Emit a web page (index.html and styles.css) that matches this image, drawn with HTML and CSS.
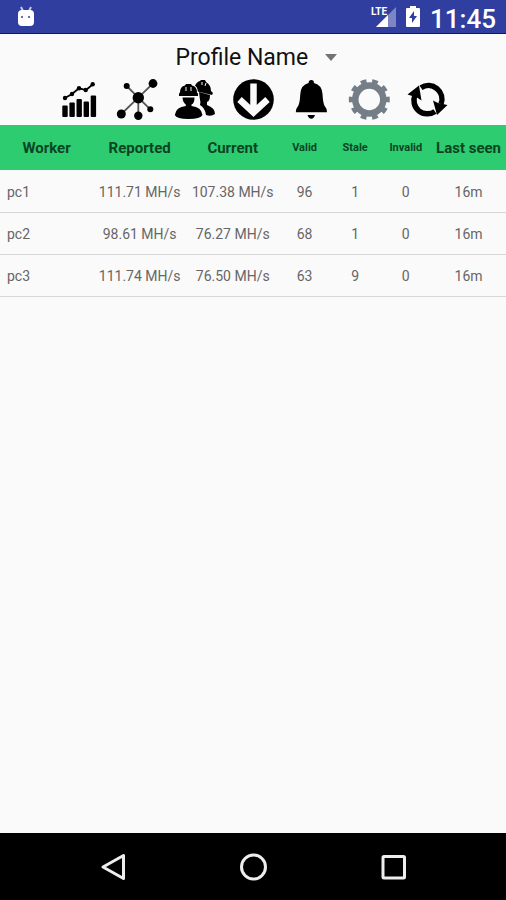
FILE: index.html
```html
<!DOCTYPE html>
<html lang="en">

<head>
    <meta charset="UTF-8">
    <meta name="viewport" content="width=device-width, initial-scale=1.0">
    <title>Workers</title>
    <link rel="stylesheet" href="styles.css">
</head>

<body>
    <header class="status-bar">
        <svg class="droid" width="20" height="22" viewBox="0 0 20 22">
            <path d="M5 1l2 4M15 1l-2 4" stroke="#c3c9ea" stroke-width="2" />
            <rect x="2" y="4" width="16" height="16" rx="4" fill="#fff" />
            <circle cx="6" cy="11" r="1" fill="#303f9f" />
            <circle cx="13" cy="11" r="1" fill="#303f9f" />
        </svg>
        <div class="status-right">
            <div class="signal">
                <span class="lte">LTE</span>
                <svg width="20" height="20" viewBox="0 0 20 20">
                    <path d="M20 0v20H0z" fill="#7c86c3" />
                    <path d="M12 8v12H0z" fill="#fff" />
                </svg>
            </div>
            <svg width="14" height="21" viewBox="0 0 14 21">
                <path d="M4 0h6v2h3q1 0 1 1v17q0 1-1 1H1q-1 0-1-1V3q0-1 1-1h3z" fill="#fff" />
                <path d="M8 5L3 12h3v5l5-7H8z" fill="#303f9f" />
            </svg>
            <span class="clock">11:45</span>
        </div>
    </header>

    <main>
        <div class="profile">
            <select id="profile" aria-label="Profile">
                <option>Profile Name</option>
            </select>
            <svg width="12" height="7" viewBox="0 0 12 7">
                <path d="M0 0h12L6 7z" fill="#737373" />
            </svg>
        </div>

        <nav class="toolbar">
            <button aria-label="Statistics">
                <svg viewBox="0 0 42 42">
                    <g>
                        <rect x="4.3" y="26.5" width="5.4" height="11.5" rx="1" />
                        <rect x="11.4" y="23.5" width="5.4" height="14.5" rx="1" />
                        <rect x="18.5" y="20" width="5.4" height="18" rx="1" />
                        <rect x="25.6" y="22.5" width="5.4" height="15.5" rx="1" />
                        <rect x="32.7" y="16.5" width="5.4" height="21.5" rx="1" />
                    </g>
                    <path d="M7 19l7-4 7-5.7 7 1.7 7-5.7" fill="none" stroke="#000" stroke-width="1.8" />
                    <circle cx="7" cy="19" r="2.2" />
                    <circle cx="14" cy="15" r="2.2" />
                    <circle cx="21" cy="9.3" r="2.2" />
                    <circle cx="27.7" cy="11" r="2.2" />
                    <circle cx="34.7" cy="5.3" r="2.2" />
                </svg>
            </button>
            <button aria-label="Network">
                <svg viewBox="0 0 42 42">
                    <path d="M22.3 18.7L37 4.3M22.3 18.7L10.7 7M22.3 18.7L5.3 35M22.3 18.7v18M22.3 18.7l12 11.6" stroke="#555" stroke-width="1.8" />
                    <circle cx="22.3" cy="18.7" r="5.7" />
                    <circle cx="37" cy="4.5" r="4.4" />
                    <circle cx="10.7" cy="7" r="3" />
                    <circle cx="5.3" cy="35" r="4.5" />
                    <circle cx="22.3" cy="36.7" r="4.2" />
                    <circle cx="34.3" cy="30.3" r="3" />
                </svg>
            </button>
            <button aria-label="Workers">
                <svg viewBox="0 0 42 42">
                    <path d="M20 9q2-6 6-7l1-1h4l1 2q5 3 5 9l2 2-1 2-12-3-6-1zM25 13l11 3q0 6-3 7v3q8 3 8 9-4 3-9 1-1-7-6-10 1-3 0-5z" />
                    <path d="M5 17v-2.5l1-1q0-6 5-7L12 5h5l1 1.500q5 1 5 7l1 1V17zM8.500 18.500h12q0 6-3 7V27q10 1 11 9-2 4-14 4T.8 36q1-8 11-9v-1.500q-3-2-3.300-7z" stroke="#fafafa" stroke-width="2" paint-order="stroke" />
                    <path d="M12 8v4M17 8v4M28 3v3M32 4l-1 3" stroke="#fafafa" stroke-width="1" />
                </svg>
            </button>
            <button aria-label="Payouts">
                <svg viewBox="0 0 42 42">
                    <circle cx="21.5" cy="20.5" r="20.3" />
                    <path d="M21.5 4.5v30M7.5 20.5l14 13 14-13" fill="none" stroke="#fafafa" stroke-width="6.5" />
                </svg>
            </button>
            <button aria-label="Alerts">
                <svg viewBox="0 0 42 42">
                    <path d="M21.3 1q2.7 0 2.7 3 8 2 8.5 11 .5 10 2.5 12.500 2 2 2 5.800H5.800q0-3.800 2-5.800Q9.800 25 10.300 15q.5-9 8.300-11 0-3 2.700-3zM17.500 36h7.500q-1 3.700-3.700 3.700T17.500 36z" />
                </svg>
            </button>
            <button aria-label="Settings">
                <svg viewBox="0 0 42 42">
                    <g fill="none" stroke="#757d87">
                        <circle cx="21.3" cy="20.5" r="14" stroke-width="6.5" />
                        <circle cx="21.3" cy="20.5" r="18.5" stroke-width="4" pathLength="100" stroke-dasharray="5 5" stroke-dashoffset="2.5" />
                    </g>
                </svg>
            </button>
            <button aria-label="Refresh">
                <svg viewBox="0 0 42 42">
                    <path d="M15 8.8A13.500 13.500 0 0 1 35 25M29 32.500A13.500 13.500 0 0 1 9 16" fill="none" stroke="#000" stroke-width="5.5" />
                    <path d="M1.500 15.500L13 6.500l2.500 15-4.500-3zM41.500 26L31 36l-4-14.500 5 2.500z" />
                </svg>
            </button>
        </nav>

        <table class="workers">
            <thead>
                <tr>
                    <th class="wide">Worker</th>
                    <th class="wide">Reported</th>
                    <th class="wide">Current</th>
                    <th class="small">Valid</th>
                    <th class="small">Stale</th>
                    <th class="small">Invalid</th>
                    <th>Last seen</th>
                </tr>
            </thead>
            <tbody>
                <tr>
                    <td>pc1</td>
                    <td>111.71 MH/s</td>
                    <td>107.38 MH/s</td>
                    <td>96</td>
                    <td>1</td>
                    <td>0</td>
                    <td>16m</td>
                </tr>
                <tr>
                    <td>pc2</td>
                    <td>98.61 MH/s</td>
                    <td>76.27 MH/s</td>
                    <td>68</td>
                    <td>1</td>
                    <td>0</td>
                    <td>16m</td>
                </tr>
                <tr>
                    <td>pc3</td>
                    <td>111.74 MH/s</td>
                    <td>76.50 MH/s</td>
                    <td>63</td>
                    <td>9</td>
                    <td>0</td>
                    <td>16m</td>
                </tr>
            </tbody>
        </table>
    </main>

    <footer class="nav-bar">
        <button aria-label="Back">
            <svg width="28" height="28" viewBox="0 0 28 28">
                <path d="M24.5 2.5v23L4 14z" />
            </svg>
        </button>
        <button aria-label="Home">
            <svg width="28" height="28" viewBox="0 0 28 28">
                <circle cx="14.5" cy="14" r="12" />
            </svg>
        </button>
        <button aria-label="Recent apps">
            <svg width="28" height="28" viewBox="0 0 28 28">
                <rect x="4" y="3.5" width="21.5" height="21.5" rx="1" />
            </svg>
        </button>
    </footer>
</body>

</html>
```

FILE: styles.css
```css
* {
    box-sizing: border-box;
}

body {
    display: flex;
    flex-direction: column;
    min-height: 100vh;
    margin: 0;
    font-family: Roboto, "Liberation Sans", sans-serif;
    background-color: #fafafa;
}

button {
    padding: 0;
    border: none;
    background: none;
}

svg {
    display: block;
}

/* status bar */
.status-bar {
    display: flex;
    justify-content: space-between;
    align-items: center;
    height: 34px;
    padding: 0 10px 0 16px;
    border-bottom: 1px solid #0a1290;
    background-color: #303f9f;
    color: #fff;
}

.status-right {
    display: flex;
    align-items: center;
    gap: 10px;
}

.signal {
    position: relative;
    padding-left: 5px;
}

.lte {
    position: absolute;
    top: 0;
    left: 0;
    font-size: 10px;
    font-weight: 700;
    line-height: 10px;
}

.clock {
    font-size: 26px;
    font-weight: 500;
    line-height: 32px;
    padding-top: 4px;
}

/* profile drop-down */
main {
    flex: 1;
}

.profile {
    display: flex;
    justify-content: center;
    align-items: center;
    gap: 16px;
    height: 45px;
    padding: 2px 0 0 6px;
}

.profile select {
    appearance: none;
    padding: 0;
    border: none;
    background: none;
    color: #111;
    font-family: inherit;
    font-size: 23px;
    line-height: 28px;
}

/* icons */
.toolbar {
    display: flex;
    justify-content: center;
    gap: 16px;
    padding-bottom: 4px;
}

.toolbar svg {
    width: 42px;
    height: 42px;
}

/* workers table */
.workers {
    width: 100%;
    table-layout: fixed;
    border-collapse: collapse;
    text-align: center;
}

.workers th {
    height: 45px;
    padding: 0;
    background-color: #2ecc71;
    color: #0c4423;
    font-size: 15px;
    font-weight: 700;
    white-space: nowrap;
}

.workers .wide {
    width: 18.4%;
}

.workers .small {
    width: 10%;
    font-size: 11px;
}

.workers td {
    height: 42px;
    padding: 2px 0 0;
    border-bottom: 1px solid #d6d6d6;
    color: #666;
    font-size: 14px;
    white-space: nowrap;
}

.workers td:first-child {
    padding-left: 7px;
    text-align: left;
}

/* bottom navigation */
.nav-bar {
    display: flex;
    justify-content: center;
    gap: 112px;
    padding: 20px 0 19px;
    background-color: #000;
}

.nav-bar svg {
    fill: none;
    stroke: #eee;
    stroke-width: 3;
    stroke-linejoin: round;
}
```
